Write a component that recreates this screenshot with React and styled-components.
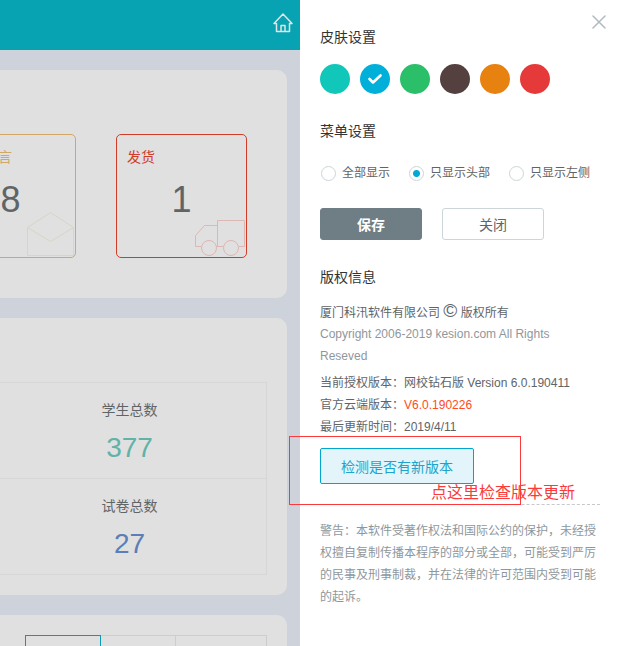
import React, { useState } from 'react';
import styled, { createGlobalStyle } from 'styled-components';

const skins = [
  { name: '青色', color: '#10c7ba' },
  { name: '蓝色', color: '#00b0d9' },
  { name: '绿色', color: '#2bbf6a' },
  { name: '棕色', color: '#54403e' },
  { name: '橙色', color: '#e7810f' },
  { name: '红色', color: '#e63a3a' },
];

const menuModes = ['全部显示', '只显示头部', '只显示左侧'];

const stats = [
  { label: '学生总数', value: 377, color: '#5fb3a9' },
  { label: '试卷总数', value: 27, color: '#5c7db5' },
];

function Dashboard() {
  return (
    <Main>
      <Header>
        <HomeLink href='#home' aria-label='首页'>
          <svg width='20' height='20' viewBox='0 0 20 20'>
            <path d='M3.5 10.5H1L10 1L19 10.5H16.5V18.5H3.5Z' />
            <path d='M8 18.5V12.5H12V18.5' />
          </svg>
        </HomeLink>
      </Header>
      <Content>
        <TodoCard>
          <Tile $color='#d1a766'>
            <TileLabel>最新留言</TileLabel>
            <TileValue>8</TileValue>
            <TileIcon width='48' height='46' viewBox='0 0 48 46' $color='#d8d4c6'>
              <path d='M0.5 16.5L23.5 1.5L46.5 16.5V44.5H0.5Z' />
              <path d='M0.5 16.5L23.5 30.5L46.5 16.5' />
            </TileIcon>
          </Tile>
          <Tile $color='#cf3d28'>
            <TileLabel>发货</TileLabel>
            <TileValue>1</TileValue>
            <TileIcon width='52' height='38' viewBox='0 0 52 38' $color='#dcb7b4'>
              <path d='M23.5 27.5V1.5H50.5V27.5H45' />
              <path d='M23.5 6.5H10.5L1.5 16.5V27.5H7M22 27.5H29' />
              <circle cx='15' cy='29' r='7.5' />
              <circle cx='37' cy='29' r='7.5' />
            </TileIcon>
          </Tile>
        </TodoCard>
        <StatCard>
          <StatList>
            {stats.map((stat) => (
              <Stat key={stat.label}>
                <dt>{stat.label}</dt>
                <StatValue $color={stat.color}>{stat.value}</StatValue>
              </Stat>
            ))}
          </StatList>
        </StatCard>
        <TabCard>
          <Tab $width={76} $active aria-label='按日' />
          <Tab $width={75} aria-label='按周' />
          <Tab $width={91} aria-label='按月' />
        </TabCard>
      </Content>
    </Main>
  );
}

function SettingsDrawer() {
  const [skin, setSkin] = useState('蓝色');
  const [mode, setMode] = useState('只显示头部');

  return (
    <Drawer>
      <CloseButton aria-label='关闭面板'>
        <svg width='14' height='14' viewBox='0 0 14 14'>
          <path d='M1 1L13 13M13 1L1 13' />
        </svg>
      </CloseButton>

      <Title>皮肤设置</Title>
      <Swatches>
        {skins.map(({ name, color }) => (
          <Swatch
            key={name}
            $color={color}
            aria-label={name}
            aria-pressed={skin === name}
            onClick={() => setSkin(name)}
          >
            {skin === name && (
              <svg width='16' height='12' viewBox='0 0 16 12'>
                <path d='M2.5 6L6 9.5L13.5 2.5' />
              </svg>
            )}
          </Swatch>
        ))}
      </Swatches>

      <Title>菜单设置</Title>
      <Modes>
        {menuModes.map((item) => (
          <ModeLabel key={item}>
            <Radio
              type='radio'
              name='menu-mode'
              checked={mode === item}
              onChange={() => setMode(item)}
            />
            {item}
          </ModeLabel>
        ))}
      </Modes>
      <Actions>
        <Button $primary>保存</Button>
        <Button>关闭</Button>
      </Actions>

      <Title>版权信息</Title>
      <Company>
        厦门科汛软件有限公司 <CopyMark>©</CopyMark> 版权所有
      </Company>
      <Muted>Copyright 2006-2019 kesion.com All Rights Reseved</Muted>
      <Versions>
        <li>当前授权版本：网校钻石版 Version 6.0.190411</li>
        <li>
          官方云端版本：<em>V6.0.190226</em>
        </li>
        <li>最后更新时间：2019/4/11</li>
      </Versions>
      <UpdateArea>
        <UpdateButton>检测是否有新版本</UpdateButton>
        <MarkFrame />
        <MarkText>点这里检查版本更新</MarkText>
      </UpdateArea>
      <Muted>
        警告：本软件受著作权法和国际公约的保护，未经授权擅自复制传播本程序的部分或全部，可能受到严厉的民事及刑事制裁，并在法律的许可范围内受到可能的起诉。
      </Muted>
    </Drawer>
  );
}

export default function App() {
  return (
    <Page>
      <GlobalStyle />
      <Dashboard />
      <SettingsDrawer />
    </Page>
  );
}

const GlobalStyle = createGlobalStyle`
  * {
    box-sizing: border-box;
  }
  body {
    margin: 0;
    font-family: 'Liberation Sans', 'Noto Sans CJK SC', sans-serif;
    font-size: 12px;
    line-height: 22px;
    color: #5f6467;
  }
  h2, p, ul, dl, dd {
    margin: 0;
    padding: 0;
  }
  button {
    padding: 0;
    font-family: inherit;
    cursor: pointer;
  }
  svg {
    display: block;
    fill: none;
  }
`;

const Page = styled.div`
  display: flex;
  height: 100vh;
  overflow: hidden;
`;

const Main = styled.main`
  flex: 1;
  min-width: 0;
  overflow: hidden;
  background-color: #ced2db;
`;

const Header = styled.header`
  display: flex;
  justify-content: flex-end;
  align-items: center;
  height: 50px;
  padding: 0 7px;
  background-color: #07a3b2;
`;

const HomeLink = styled.a`
  padding-bottom: 4px;
  svg {
    stroke: #dfe5e6;
    stroke-width: 1.5;
    stroke-linejoin: round;
  }
`;

const Content = styled.div`
  display: flex;
  flex-direction: column;
  gap: 20px;
  margin-left: -28px;
  padding: 20px 13px 0 0;
`;

const Card = styled.section`
  border-radius: 10px;
  background-color: #e0e0e0;
`;

const TodoCard = styled(Card)`
  display: flex;
  justify-content: flex-end;
  gap: 40px;
  padding: 64px 40px 40px;
`;

const Tile = styled.div`
  position: relative;
  flex: none;
  width: 131px;
  height: 124px;
  padding: 11px 10px;
  border: 1px solid ${({ $color }) => $color};
  border-radius: 5px;
  color: ${({ $color }) => $color};
`;

const TileLabel = styled.p`
  font-size: 14px;
`;

const TileValue = styled.p`
  padding-top: 8px;
  font-size: 36px;
  line-height: 48px;
  text-align: center;
  color: #5f6467;
`;

const TileIcon = styled.svg`
  position: absolute;
  right: 0;
  bottom: 0;
  stroke: ${({ $color }) => $color};
`;

const StatCard = styled(Card)`
  padding: 64px 20px 20px;
`;

const StatList = styled.dl`
  border: 1px solid #d6d6d6;
`;

const Stat = styled.div`
  display: flex;
  flex-direction: column;
  justify-content: center;
  align-items: center;
  gap: 12px;
  height: 95px;
  font-size: 14px;
  & + & {
    height: 96px;
    border-top: 1px solid #d6d6d6;
  }
`;

const StatValue = styled.dd`
  font-size: 28px;
  line-height: 30px;
  color: ${({ $color }) => $color};
`;

const TabCard = styled(Card)`
  display: flex;
  justify-content: flex-end;
  padding: 20px;
`;

const Tab = styled.button`
  flex: none;
  width: ${({ $width }) => $width}px;
  height: 40px;
  border: 1px solid ${({ $active }) => ($active ? '#079bb5' : '#cdcdcd')};
  border-radius: 0;
  background: none;
  & + & {
    border-left: 0;
  }
`;

const Drawer = styled.aside`
  position: relative;
  flex: none;
  width: 320px;
  padding: 26px 20px;
  background-color: #fff;
`;

const CloseButton = styled.button`
  position: absolute;
  top: 15px;
  right: 14px;
  border: 0;
  background: none;
  svg {
    stroke: #b0bac0;
    stroke-width: 1.5;
    stroke-linecap: round;
  }
`;

const Title = styled.h2`
  font-size: 14px;
  font-weight: 400;
  color: #333;
`;

const Swatches = styled.div`
  display: flex;
  gap: 10px;
  padding: 16px 0 26px;
`;

const Swatch = styled.button`
  display: flex;
  justify-content: center;
  align-items: center;
  width: 30px;
  height: 30px;
  border: 0;
  border-radius: 50%;
  background-color: ${({ $color }) => $color};
  svg {
    stroke: #fff;
    stroke-width: 2.6;
    stroke-linecap: round;
    stroke-linejoin: round;
  }
`;

const Modes = styled.div`
  display: flex;
  gap: 18px;
  padding: 20px 0 24px;
`;

const ModeLabel = styled.label`
  display: flex;
  align-items: center;
  white-space: nowrap;
`;

const Radio = styled.input`
  appearance: none;
  width: 15px;
  height: 15px;
  margin: 0 6px 0 1px;
  border: 1px solid #ccd5d8;
  border-radius: 50%;
  background-color: #fff;
  &:checked {
    background-image: radial-gradient(circle, #00a9d6 3px, transparent 4px);
  }
`;

const Actions = styled.div`
  display: flex;
  gap: 20px;
  padding-bottom: 26px;
`;

const Button = styled.button`
  width: 102px;
  height: 32px;
  border: 1px solid ${({ $primary }) => ($primary ? '#6f7d85' : '#ccd5d8')};
  border-radius: 3px;
  background-color: ${({ $primary }) => ($primary ? '#6f7d85' : '#fff')};
  color: ${({ $primary }) => ($primary ? '#fff' : '#5f6467')};
  font-size: 14px;
  font-weight: ${({ $primary }) => ($primary ? 700 : 400)};
`;

const Company = styled.p`
  height: 22px;
  margin-top: 12px;
  margin-bottom: 1px;
`;

const CopyMark = styled.span`
  font-size: 19px;
`;

const Muted = styled.p`
  color: #8f979c;
`;

const Versions = styled.ul`
  padding: 5px 0 10px;
  list-style: none;
  em {
    font-style: normal;
    color: #ff4a22;
  }
`;

const UpdateArea = styled.div`
  position: relative;
  margin-bottom: 15px;
  padding-bottom: 20px;
  border-bottom: 1px dashed #c8c8c8;
`;

const UpdateButton = styled.button`
  display: block;
  width: 154px;
  height: 36px;
  border: 1px solid #00a5d0;
  border-radius: 2px;
  background-color: #e3f5fa;
  color: #1ba4cc;
  font-size: 14px;
`;

const MarkFrame = styled.div`
  position: absolute;
  top: -12px;
  left: -31px;
  width: 232px;
  height: 69px;
  border: 1px solid #fb3b3b;
  pointer-events: none;
`;

const MarkText = styled.span`
  position: absolute;
  top: 34px;
  left: 111px;
  font-size: 16px;
  color: #fb3b3b;
  white-space: nowrap;
`;
